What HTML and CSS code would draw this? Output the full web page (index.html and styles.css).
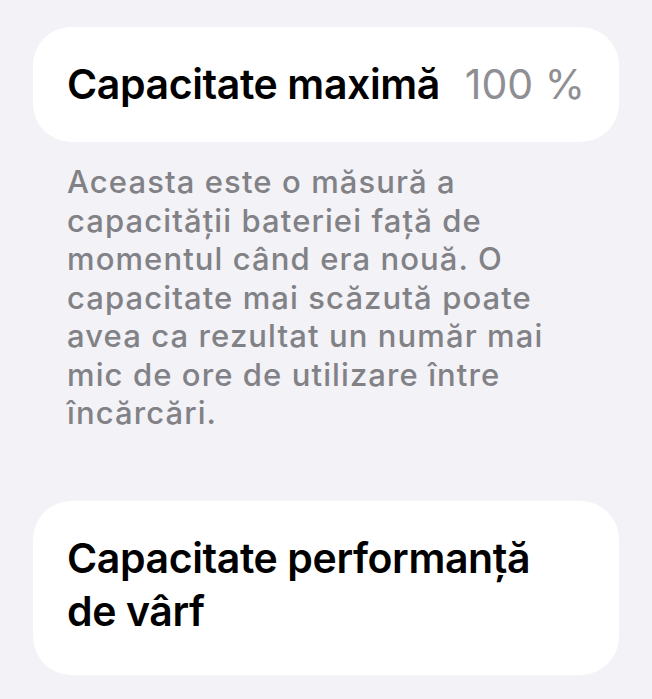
FILE: index.html
```html
<!DOCTYPE html>
<html lang="ro">

<head>
    <meta charset="UTF-8">
    <meta name="viewport" content="width=device-width, initial-scale=1.0">
    <title>Sănătate baterie</title>
    <link rel="stylesheet" href="styles.css">
</head>

<body>
    <div class="container">
        <div class="card card-row">
            <span class="card-title">Capacitate maximă</span>
            <span class="card-value">100 %</span>
        </div>

        <p class="card-footer">
            Aceasta este o măsură a<br>
            capacității bateriei față de<br>
            momentul când era nouă. O<br>
            capacitate mai scăzută poate<br>
            avea ca rezultat un număr mai<br>
            mic de ore de utilizare între<br>
            încărcări.
        </p>

        <div class="card card-tall">
            <span class="card-title">Capacitate performanță<br>de vârf</span>
        </div>
    </div>
</body>

</html>
```

FILE: styles.css
```css
body {
    margin: 0;
    background-color: #f2f2f7;
    font-family: "Inter", "Liberation Sans", sans-serif;
}

.container {
    padding: 27px 33px 0 33px;
}

.card {
    background-color: #ffffff;
    border-radius: 38px;
    padding: 31px 34px;
}

.card-row {
    display: flex;
    justify-content: space-between;
    align-items: baseline;
}

.card-tall {
    padding-bottom: 37px;
}

.card-title {
    font-size: 41px;
    line-height: 53px;
    font-weight: 600;
    letter-spacing: -0.4px;
    color: #000000;
}

.card-value {
    font-size: 41px;
    line-height: 53px;
    font-weight: 400;
    color: #8e8e93;
}

.card-footer {
    margin: 21px 0 68px 0;
    padding: 0 34px;
    font-size: 31px;
    line-height: 38.5px;
    font-weight: 500;
    letter-spacing: 1.1px;
    color: #818186;
}
```
